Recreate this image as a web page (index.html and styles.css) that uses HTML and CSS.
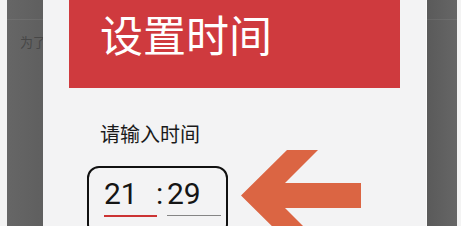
FILE: index.html
```html
<!DOCTYPE html>
<html lang="zh">
<head>
<meta charset="utf-8">
<link rel="stylesheet" href="styles.css">
</head>
<body>
<div class="screen">
  <div class="backdrop">
    <div class="under-line"></div>
    <div class="under-text">为了</div>
    <div class="dialog">
      <div class="header"><h1 class="title">设置时间</h1></div>
      <div class="body">
        <div class="label">请输入时间</div>
        <div class="row">
          <div class="timebox">
            <span class="field active">21</span><span class="colon">:</span><span class="field idle">29</span>
          </div>
          <svg class="arrow" width="120" height="91" viewBox="0 0 120 91">
            <polygon points="0,45.5 46,0 77,0 44,33 120,33 120,58 44,58 77,91 46,91" fill="#db6543"/>
          </svg>
        </div>
      </div>
    </div>
  </div>
</div>
</body>
</html>
```
FILE: styles.css
```css
* { box-sizing: border-box; }
html, body { margin: 0; padding: 0; }
body {
  width: 461px;
  height: 226px;
  overflow: hidden;
  background: #f3f3f3;
  font-family: "Noto Sans CJK SC", "Roboto", sans-serif;
}
.screen {
  width: 461px;
  height: 226px;
  padding: 0 4px 0 7px;
  background: #f3f3f3;
}
.backdrop {
  position: relative;
  height: 226px;
  background: linear-gradient(to right, #666666 0, #5f5f5f 36px, #5a5a5a 420px, #666666 450px);
  overflow: hidden;
}
.under-line {
  margin-top: 19px;
  height: 1px;
  background: rgba(255, 255, 255, 0.07);
}
.under-text {
  margin: 14px 0 0 13px;
  font-size: 13px;
  line-height: 16px;
  color: #474747;
}
.dialog {
  position: absolute;
  left: 36px;
  top: 0;
  width: 384px;
  height: 226px;
  background: #f3f3f4;
  padding: 0 26px;
  border-right: 1px solid #fafafa;
}
.header {
  height: 88px;
  background: #cf3a3e;
  padding: 12px 0 0 31px;
}
.title {
  margin: 0;
  font-size: 43px;
  line-height: 43px;
  font-weight: 400;
  color: #ffffff;
}
.body {
  padding: 36px 0 0 18px;
}
.label {
  margin-left: 13px;
  font-size: 20px;
  line-height: 20px;
  color: #1a1a1a;
}
.row {
  display: flex;
  align-items: flex-start;
  margin-top: 22px;
}
.timebox {
  display: flex;
  align-items: flex-start;
  width: 141px;
  height: 70px;
  border: 2px solid #111111;
  border-radius: 12px;
  padding: 8px 0 0 15px;
  font-family: "Roboto", sans-serif;
  font-size: 30px;
  line-height: 36px;
  color: #151515;
}
.field {
  display: block;
  width: 53px;
  padding-bottom: 3px;
}
.field.active {
  border-bottom: 2px solid #cc3333;
}
.field.idle {
  width: 54px;
  border-bottom: 1px solid #858585;
}
.colon {
  display: block;
  width: 10px;
  margin-left: -1px;
  margin-right: 1px;
}
.arrow {
  display: block;
  margin: -16px 0 0 13px;
}
```
